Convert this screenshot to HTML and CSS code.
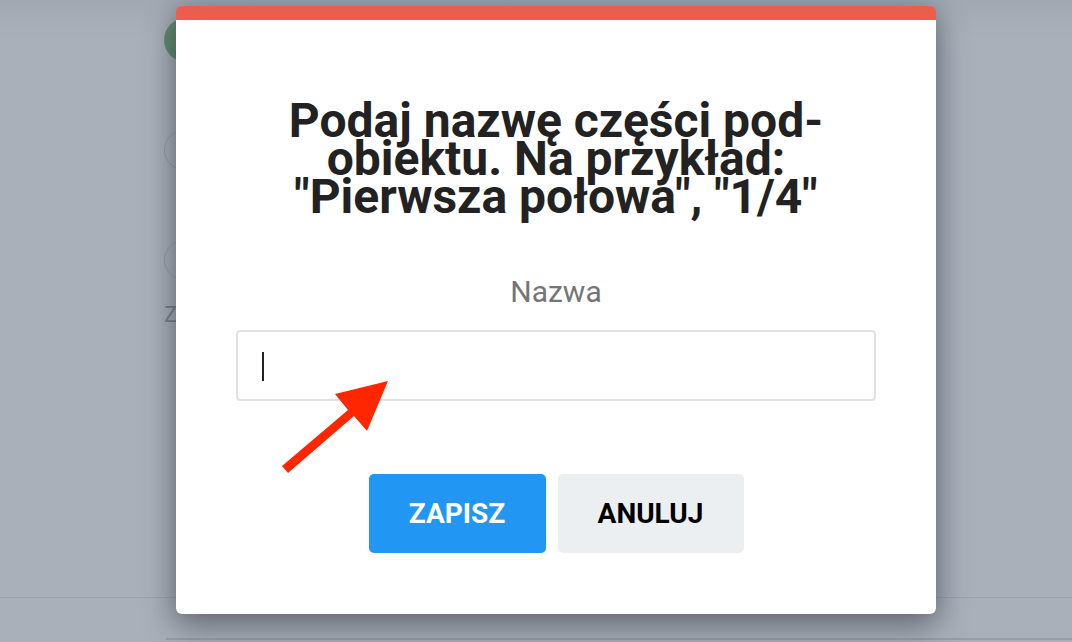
FILE: index.html
```html
<!DOCTYPE html>
<html lang="pl">
<head>
<meta charset="utf-8">
<title>Podaj nazwę</title>
<link rel="stylesheet" href="styles.css">
</head>
<body>
<div class="page">
  <div class="side">
    <div class="avatar"></div>
    <div class="round-btn first"></div>
    <div class="round-btn second"></div>
    <div class="side-label">Z</div>
  </div>
  <div class="page-footer">
    <div class="footer-card"></div>
  </div>
</div>

<div class="overlay">
  <div class="modal">
    <h2 class="modal-title">Podaj nazwę części pod-obiektu. Na przykład: "Pierwsza połowa", "1/4"</h2>
    <div class="field-label">Nazwa</div>
    <div class="field-input"><span class="caret"></span></div>
    <div class="actions">
      <button class="btn btn-primary">ZAPISZ</button>
      <button class="btn btn-secondary">ANULUJ</button>
    </div>
  </div>
</div>

<svg class="annotation" viewBox="0 0 1072 642" width="1072" height="642" aria-hidden="true">
  <polygon points="388,381 335,394 348,410 282,466 288,473 354,416 367,431" fill="#ff2600"/>
</svg>
</body>
</html>
```
FILE: styles.css
```css
html, body {
  margin: 0;
  padding: 0;
}
body {
  width: 1072px;
  height: 642px;
  overflow: hidden;
  background: #a9b0ba;
  font-family: Roboto, "Liberation Sans", sans-serif;
  position: relative;
}

/* background page (dimmed) */
.page {
  height: 642px;
  display: flex;
  flex-direction: column;
  background: linear-gradient(to bottom, #a2a9b3 0px, #a9b0ba 40px);
}
.side {
  padding: 18px 0 0 164px;
  flex: 1;
}
.avatar {
  width: 44px;
  height: 44px;
  border-radius: 50%;
  background: #5f8b6d;
}
.round-btn {
  width: 38px;
  height: 38px;
  border-radius: 50%;
  border: 1px solid #959ca6;
}
.round-btn.first { margin-top: 68px; }
.round-btn.second { margin-top: 70px; }
.side-label {
  margin-top: 22px;
  font-size: 22px;
  color: #7b818b;
  line-height: 26px;
}
.page-footer {
  height: 44px;
  border-top: 1px solid #9ca3ad;
}
.footer-card {
  margin: 40px 0 0 166px;
  border-top: 2px solid #969da7;
  height: 10px;
}

/* modal overlay */
.overlay {
  position: absolute;
  left: 0;
  top: 0;
  width: 100%;
  height: 100%;
}
.modal {
  position: absolute;
  left: 176px;
  top: 6px;
  width: 760px;
  box-sizing: border-box;
  background: #fff;
  border-top: 14px solid #eb5e4e;
  border-radius: 6px;
  padding: 82px 60px 61px;
  text-align: center;
  box-shadow: 0 14px 34px rgba(40, 46, 56, 0.45), 0 0 22px rgba(40, 46, 56, 0.25);
}
.modal-title {
  margin: 0 auto;
  width: 600px;
  font-size: 48px;
  line-height: 38px;
  font-weight: 700;
  color: #222;
}
.field-label {
  margin-top: 59px;
  font-size: 30px;
  line-height: 34px;
  color: #757575;
}
.field-input {
  margin-top: 21px;
  height: 71px;
  box-sizing: border-box;
  border: 2px solid #e1e1e1;
  border-radius: 4px;
  padding: 20px 24px;
  text-align: left;
}
.caret {
  display: block;
  width: 2px;
  height: 29px;
  background: #222;
}
.actions {
  margin-top: 73px;
  display: flex;
  justify-content: center;
  gap: 12px;
}
.btn {
  height: 79px;
  border: none;
  border-radius: 5px;
  font-family: Roboto, "Liberation Sans", sans-serif;
  font-size: 28px;
  font-weight: 700;
  cursor: pointer;
}
.btn-primary {
  width: 177px;
  background: #2196f3;
  color: #fff;
}
.btn-secondary {
  width: 186px;
  background: #eceff1;
  color: #000;
}

.annotation {
  position: absolute;
  left: 0;
  top: 0;
  pointer-events: none;
}
```
